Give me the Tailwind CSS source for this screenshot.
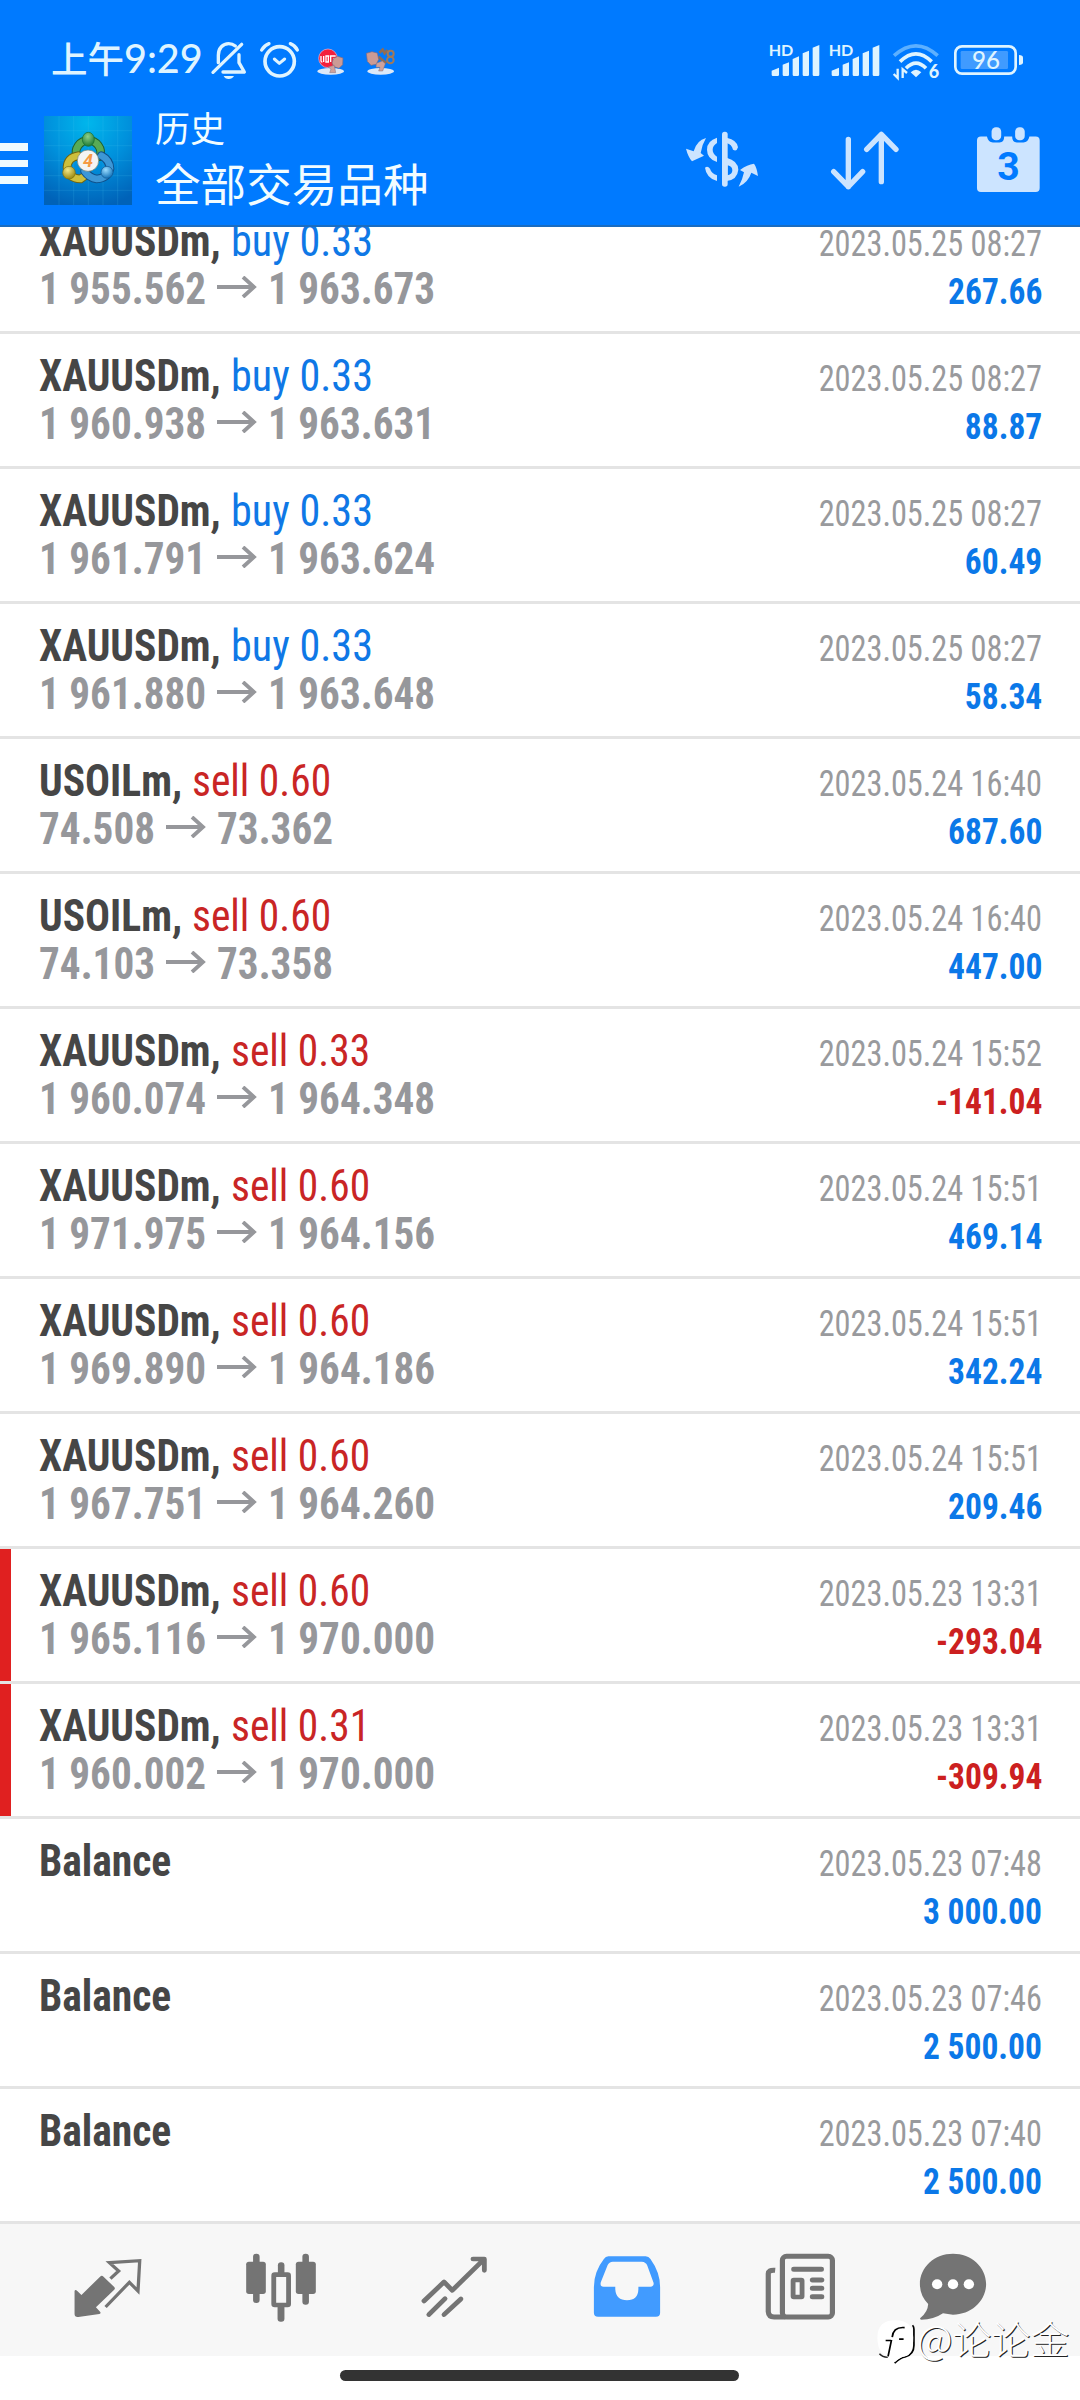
<!DOCTYPE html>
<html lang="zh">
<head>
<meta charset="utf-8">
<title>历史</title>
<script src="https://cdn.jsdelivr.net/npm/@tailwindcss/browser@4"></script>
</head>
<body class="bg-white">
<div class="relative flex h-[2400px] w-[1080px] flex-col overflow-hidden bg-white">

  <!-- Header -->
  <header class="relative z-10 h-[227px] shrink-0 border-b-2 border-[#1a6cc0] bg-[#007aff] pt-[39px]">
    <!-- Status bar -->
    <div class="flex h-[44px] items-start pl-[51px] text-[#dff4ff]">
      <div class="-mt-[3px] flex w-[158px] shrink-0 items-baseline whitespace-nowrap leading-[44px]">
        <span class="font-['Noto_Sans_CJK_SC',sans-serif] text-[36.5px] font-medium">上午</span>
        <span class="font-[Lato,sans-serif] text-[39.5px] font-medium">9:29</span>
      </div>
      <svg class="h-[44px] w-[40px] shrink-0" viewBox="626 117 120 132" fill="none" stroke="currentColor" stroke-width="10" stroke-linecap="round" stroke-linejoin="round">
        <path d="M654 188V166C654 144 668 131 685 131C693 131 700 134 705 138"/>
        <path d="M638 217L724 133"/>
        <path d="M716 164V188L732 216H668"/>
        <path d="M670 228H701Q696 237 685 237T670 228Z" fill="currentColor" stroke="none"/>
      </svg>
      <svg class="ml-[9px] h-[44px] w-[43px] shrink-0" viewBox="774 117 129 132" fill="none" stroke="currentColor" stroke-width="11" stroke-linecap="round" stroke-linejoin="round">
        <circle cx="839" cy="184" r="44"/>
        <path d="M823 177L838 190L854 177" stroke-width="9"/>
        <path d="M785 150Q793 136 807 131M871 131Q885 136 892 150" stroke-width="10"/>
      </svg>
      <svg class="ml-[14px] h-[44px] w-[32px] shrink-0" viewBox="946 117 96 132">
        <ellipse cx="993" cy="214" rx="40" ry="10" fill="#dce9f8"/>
        <circle cx="985" cy="175" r="28" fill="#f3203c" stroke="#e9b9d4" stroke-width="2"/>
        <path d="M964 168v14q0 4 4 4M972 168v18M979 168v18h7v-18zM993 168v18M990 168h18M1000 176h8" fill="none" stroke="#fff" stroke-width="4"/>
        <path d="M1001 176L1014 169L1030 174L1029 194L1018 205L1003 200L997 189Z" fill="#cb9b95" stroke="#7f6a7e" stroke-width="2"/>
        <path d="M985 201L1004 196L1008 218H990L994 207Z" fill="#cfa29c" stroke="#85707e" stroke-width="1.5"/>
      </svg>
      <svg class="ml-[17px] h-[44px] w-[34px] shrink-0" viewBox="1094 117 102 132">
        <ellipse cx="1144" cy="214" rx="40" ry="10" fill="#dce9f8"/>
        <path d="M1140 158L1150 149L1156 160L1164 150M1138 170L1160 190" fill="none" stroke="#8f6c55" stroke-width="8"/>
        <circle cx="1174" cy="161" r="9" fill="none" stroke="#a0795a" stroke-width="6"/>
        <circle cx="1173" cy="180" r="10" fill="none" stroke="#a0795a" stroke-width="6"/>
        <path d="M1101 160L1118 155L1134 159L1138 178L1131 193L1115 196L1104 184Z" fill="#cb9b95" stroke="#7f6a7e" stroke-width="2"/>
        <path d="M1131 190L1149 183L1158 191L1150 213H1138L1142 202L1130 202Z" fill="#cfa29c" stroke="#85707e" stroke-width="1.5"/>
      </svg>
      <svg class="ml-[370px] h-[44px] w-[54px] shrink-0" viewBox="326 117 162 132" fill="currentColor">
        <text x="328" y="168" font-family="Lato" font-weight="700" font-size="48" textLength="74" lengthAdjust="spacingAndGlyphs">HD</text>
        <path d="M337 212L359 203V224Q359 228 355 228H341Q337 228 337 224ZM370 194L389 187V224Q389 228 385 228H374Q370 228 370 224ZM400 177L419 169V224Q419 228 415 228H404Q400 228 400 224ZM430 160L449 152V224Q449 228 445 228H434Q430 228 430 224ZM460 143L480 135V224Q480 228 476 228H464Q460 228 460 224Z"/>
      </svg>
      <svg class="ml-[6px] h-[44px] w-[54px] shrink-0" viewBox="326 117 162 132" fill="currentColor">
        <text x="328" y="168" font-family="Lato" font-weight="700" font-size="48" textLength="74" lengthAdjust="spacingAndGlyphs">HD</text>
        <path d="M337 212L359 203V224Q359 228 355 228H341Q337 228 337 224ZM370 194L389 187V224Q389 228 385 228H374Q370 228 370 224ZM400 177L419 169V224Q419 228 415 228H404Q400 228 400 224ZM430 160L449 152V224Q449 228 445 228H434Q430 228 430 224ZM460 143L480 135V224Q480 228 476 228H464Q460 228 460 224Z"/>
      </svg>
      <svg class="ml-[9px] h-[44px] w-[50px] shrink-0" viewBox="693 117 150 132" fill="none" stroke="currentColor" stroke-width="11">
        <path d="M702 167Q768 108 833 167" stroke="#5db0ff"/>
        <path d="M720 185Q768 138 815 185"/>
        <path d="M738 205Q768 174 798 205"/>
        <path d="M752 217Q768 202 784 217L768 232Z" fill="currentColor" stroke="none"/>
        <path d="M713 206V234L701 222M728 234V208L741 219" stroke-width="7"/>
        <text x="806" y="235" font-family="Lato" font-weight="900" font-size="54" fill="currentColor" stroke="none">6</text>
      </svg>
      <svg class="ml-[12px] h-[44px] w-[72px] shrink-0" viewBox="879 117 216 132">
        <rect x="886" y="139" width="181" height="82" rx="20" fill="none" stroke="currentColor" stroke-width="8"/>
        <rect x="902" y="153" width="142" height="54" rx="4" fill="#409bff"/>
        <path d="M1077 165Q1089 165 1089 173V187Q1089 195 1077 195Z" fill="currentColor"/>
        <text x="936" y="208" font-family="Lato" font-weight="500" font-size="73" textLength="84" lengthAdjust="spacingAndGlyphs" fill="currentColor">96</text>
      </svg>
    </div>

    <!-- Toolbar -->
    <div class="flex items-start pt-[33px] text-[#cce4ff]">
      <div class="mt-[27px] flex w-[28px] shrink-0 flex-col gap-[9px]">
        <div class="h-[7.5px] bg-[#eefaff]"></div>
        <div class="h-[7.5px] bg-[#eefaff]"></div>
        <div class="h-[7.5px] bg-[#eefaff]"></div>
      </div>
      <svg class="ml-[16px] h-[89px] w-[88px] shrink-0" viewBox="132 348 264 267">
        <defs>
          <radialGradient id="tile" cx=".5" cy=".08" r=".95"><stop offset="0" stop-color="#00b6ec"/><stop offset=".5" stop-color="#0090dc"/><stop offset="1" stop-color="#0062b8"/></radialGradient>
          <radialGradient id="green" cx=".45" cy=".3" r=".7"><stop offset="0" stop-color="#8fd08a"/><stop offset="1" stop-color="#1c7a35"/></radialGradient>
          <radialGradient id="gold" cx=".4" cy=".3" r=".7"><stop offset="0" stop-color="#f2e88a"/><stop offset="1" stop-color="#9c8a10"/></radialGradient>
          <radialGradient id="azure" cx=".4" cy=".3" r=".7"><stop offset="0" stop-color="#9bdcff"/><stop offset="1" stop-color="#1272b8"/></radialGradient>
        </defs>
        <rect x="132" y="348" width="264" height="267" fill="url(#tile)"/>
        <path d="M177 348V615M221 348V615M265 348V615M309 348V615M353 348V615M132 392H396M132 437H396M132 482H396M132 527H396M132 571H396" stroke="#4fc4f5" stroke-opacity=".16" stroke-width="3"/>
        <g fill="none" stroke-linecap="round">
          <path d="M230 470A37 37 0 1 1 300 470" stroke="#20602e" stroke-width="26"/>
          <path d="M230 470A37 37 0 1 1 300 470" stroke="#58ab55" stroke-width="20"/>
          <path d="M234 467Q203 472 201 502Q205 536 242 537L262 522" stroke="#6f6412" stroke-width="26"/>
          <path d="M234 467Q203 472 201 502Q205 536 242 537L262 522" stroke="#cdbf3c" stroke-width="20"/>
          <path d="M304 467Q329 480 330 506Q322 535 290 537Q268 534 254 514" stroke="#10508a" stroke-width="26"/>
          <path d="M304 467Q329 480 330 506Q322 535 290 537Q268 534 254 514" stroke="#3d97d6" stroke-width="20"/>
        </g>
        <ellipse cx="265" cy="418" rx="18" ry="21" fill="url(#green)" stroke="#176b2c" stroke-width="2"/>
        <circle cx="207" cy="518" r="19" fill="url(#gold)" stroke="#7d7012" stroke-width="2"/>
        <circle cx="321" cy="517" r="18" fill="url(#azure)" stroke="#10558f" stroke-width="2"/>
        <circle cx="264" cy="482" r="32" fill="#f4f4f4" stroke="#6f7f70" stroke-width="2"/>
        <text x="264" y="500" text-anchor="middle" font-family="Roboto" font-weight="700" font-style="italic" font-size="54" fill="#f59a45">4</text>
      </svg>
      <div class="ml-[22px] w-[530px] shrink-0 whitespace-nowrap font-['Noto_Sans_CJK_SC',sans-serif] font-normal text-[#f2fcff]">
        <div class="-mt-[15px] pl-[1px] text-[35px] leading-[52px]">历史</div>
        <div class="mt-[1px] pl-[1px] text-[45.6px] leading-[56px]">全部交易品种</div>
      </div>
      <svg class="mt-[12px] h-[62px] w-[76px] shrink-0" viewBox="72 384 228 186" fill="currentColor">
        <rect x="186" y="395" width="17" height="165" rx="8"/>
        <path d="M171 413V429Q158 437 158 449T171 470V486Q141 476 141 449T171 413Z"/>
        <path d="M135 503Q143 497 150 506Q154 520 171 526V543Q139 534 135 503Z"/>
        <path d="M200 413Q232 420 234 442Q230 456 219 449Q215 433 200 429Z"/>
        <path fill-rule="evenodd" d="M200 473Q234 482 235 509Q232 539 200 543ZM203 496V526Q217 523 217 511T203 496Z"/>
        <path d="M138 414Q125 436 122 459L132 467L96 484Q84 470 78 446L101 454Q110 421 138 414Z"/>
        <path d="M236 560Q248 538 252 517L240 510Q262 493 282 491Q290 501 294 528L274 518Q264 548 236 560Z"/>
      </svg>
      <svg class="ml-[69px] mt-[12px] h-[64px] w-[72px] shrink-0" viewBox="508 384 216 192" fill="none" stroke="currentColor" stroke-width="16" stroke-linecap="round" stroke-linejoin="round">
        <path d="M566 418V560M522 515L566 560L609 515"/>
        <path d="M665 545V403M621 448L665 403L709 448"/>
      </svg>
      <svg class="ml-[74px] mt-[9px] h-[69px] w-[67px] shrink-0" viewBox="945 376 200 208" fill="currentColor">
        <path d="M962 411H980Q984 429 998 429H1018Q1032 429 1032 411H1056Q1056 429 1070 429H1090Q1104 429 1108 411H1127Q1139 411 1139 423V566Q1139 578 1127 578H962Q950 578 950 566V423Q950 411 962 411Z"/>
        <rect x="994" y="383" width="29" height="39" rx="13"/>
        <rect x="1065" y="383" width="29" height="39" rx="13"/>
        <text x="1045" y="543" text-anchor="middle" font-family="Roboto" font-weight="700" font-size="118" fill="#007aff">3</text>
      </svg>
    </div>
  </header>

  <!-- History list; the first row is scrolled partly under the header -->
  <main id="list" class="-mt-[28px] flex h-[2025px] shrink-0 flex-col font-['Roboto_Condensed',Roboto,sans-serif]"></main>

  <!-- Bottom navigation -->
  <nav class="flex h-[132px] shrink-0 items-start bg-[#f7f7f7] pl-[68px] pt-[25px] text-[#747474]">
    <svg class="h-[77.3px] w-[80px] shrink-0" viewBox="199 148 232 232" preserveAspectRatio="none" fill="currentColor">
      <path d="M218 274Q220 268 226 274L238 286L292 231Q297 226 302 231L333 262Q337 266 333 270L280 323L292 336Q296 341 290 343L229 352Q218 353 218 343Z"/>
      <path d="M322 237L346 214L319 189L407 183L402 274L377 248L308 322" fill="none" stroke="currentColor" stroke-width="9.5"/>
    </svg>
    <svg class="ml-[93px] h-[77.3px] w-[80px] shrink-0" viewBox="700 148 232 232" preserveAspectRatio="none" fill="currentColor">
      <rect x="735" y="162" width="19" height="148" rx="9"/><rect x="715" y="186" width="57" height="97" rx="8"/>
      <rect x="878" y="162" width="19" height="153" rx="9"/><rect x="859" y="186" width="58" height="97" rx="8"/>
      <rect x="807" y="188" width="19" height="40" rx="9"/><rect x="806" y="315" width="20" height="51" rx="9"/>
      <rect x="795" y="225" width="43" height="91" rx="3" fill="#f7f7f7" stroke="currentColor" stroke-width="14"/>
    </svg>
    <svg class="ml-[93px] h-[77.3px] w-[80px] shrink-0" viewBox="1202 148 232 232" preserveAspectRatio="none" fill="none" stroke="currentColor" stroke-width="14" stroke-linecap="round" stroke-linejoin="round">
      <path d="M1231 304L1289 247L1313 272L1404 180M1373 178H1406V212"/>
      <path d="M1245 345L1292 297M1289 345L1338 298"/>
    </svg>
    <svg class="ml-[93px] h-[77.3px] w-[80px] shrink-0 text-[#419bff]" viewBox="138 148 232 232" preserveAspectRatio="none" fill="currentColor">
      <path fill-rule="evenodd" d="M200 170H308Q317 170 322 178Q350 218 350 262V339Q350 351 338 351H170Q158 351 158 339V262Q158 216 187 178Q192 170 200 170ZM213 186Q202 187 198 196L178 248Q175 261 186 261H220V269Q222 302 254 302T287 269V261H322Q333 260 331 249L313 198Q309 187 297 186Z"/>
    </svg>
    <svg class="ml-[93px] h-[77.3px] w-[80px] shrink-0" viewBox="641 148 232 232" preserveAspectRatio="none" fill="none" stroke="currentColor" stroke-width="15" stroke-linejoin="round">
      <path d="M685 212Q664 210 665 224V336Q666 352 682 352H715"/>
      <rect x="706" y="170" width="145" height="182" rx="12"/>
      <path d="M739 209H819M793 241H820M793 266H820M793 291H820" stroke-linecap="round"/>
      <rect x="737" y="241" width="26" height="51" rx="2" stroke-width="14"/>
    </svg>
    <svg class="ml-[73px] h-[77.3px] w-[80px] shrink-0" viewBox="1083 148 232 232" preserveAspectRatio="none" fill="currentColor">
      <path d="M1199 162C1252 162 1295 202 1295 253S1252 345 1199 345Q1184 344 1170 341Q1143 360 1107 360Q1101 359 1105 354Q1126 337 1127 313Q1103 288 1103 253C1103 202 1146 162 1199 162Z"/>
      <circle cx="1153" cy="254" r="15" fill="#fff"/><circle cx="1199" cy="254" r="15" fill="#fff"/><circle cx="1245" cy="254" r="15" fill="#fff"/>
    </svg>
  </nav>

  <!-- System gesture bar -->
  <div class="mt-[14px] h-[11px] w-[399px] -translate-x-px self-center rounded-full bg-[#333]"></div>

  <!-- Watermark -->
  <div class="absolute left-[876px] top-[2310px] z-20 flex items-start text-white">
    <svg class="mt-[9px] h-[46px] w-[40px] shrink-0" viewBox="974 357 116 139" preserveAspectRatio="none">
      <path d="M1028 490Q1046 474 1058 472Q1084 464 1084 436V388Q1084 380 1080 376" fill="none" stroke="#000" stroke-width="5"/>
      <path d="M984 462Q992 472 1008 473" fill="none" stroke="#222" stroke-width="4"/>
      <path d="M1030 361Q1082 361 1082 413Q1082 468 1056 470Q1044 472 1028 488Q1032 472 1012 470Q978 464 978 413Q978 361 1030 361Z" fill="#fff"/>
      <path d="M1057 383Q1024 380 1021 412M1019 420L1009 470M1002 422H1018M1041 418H1054" fill="none" stroke="#000" stroke-width="5"/>
    </svg>
    <span class="ml-[1px] whitespace-nowrap font-['Noto_Sans_CJK_SC',sans-serif] text-[39px] font-light leading-[54px] [text-shadow:1px_1px_0_#222]">@论论金</span>
  </div>
</div>

<script>
const rows = [
  ['XAUUSDm','buy','0.33','1 955.562','1 963.673','2023.05.25 08:27','267.66'],
  ['XAUUSDm','buy','0.33','1 960.938','1 963.631','2023.05.25 08:27','88.87'],
  ['XAUUSDm','buy','0.33','1 961.791','1 963.624','2023.05.25 08:27','60.49'],
  ['XAUUSDm','buy','0.33','1 961.880','1 963.648','2023.05.25 08:27','58.34'],
  ['USOILm','sell','0.60','74.508','73.362','2023.05.24 16:40','687.60'],
  ['USOILm','sell','0.60','74.103','73.358','2023.05.24 16:40','447.00'],
  ['XAUUSDm','sell','0.33','1 960.074','1 964.348','2023.05.24 15:52','-141.04'],
  ['XAUUSDm','sell','0.60','1 971.975','1 964.156','2023.05.24 15:51','469.14'],
  ['XAUUSDm','sell','0.60','1 969.890','1 964.186','2023.05.24 15:51','342.24'],
  ['XAUUSDm','sell','0.60','1 967.751','1 964.260','2023.05.24 15:51','209.46'],
  ['XAUUSDm','sell','0.60','1 965.116','1 970.000','2023.05.23 13:31','-293.04',true],
  ['XAUUSDm','sell','0.31','1 960.002','1 970.000','2023.05.23 13:31','-309.94',true],
  ['Balance','','','','','2023.05.23 07:48','3 000.00'],
  ['Balance','','','','','2023.05.23 07:46','2 500.00'],
  ['Balance','','','','','2023.05.23 07:40','2 500.00'],
];
const sideStyle = { buy: 'scale-x-[.958] text-[#0f78e6]', sell: 'scale-x-[.942] text-[#c92525]' };
document.getElementById('list').innerHTML = rows.map(([sym, side, lot, from, to, time, profit, stopped]) => `
  <div class="flex h-[135px] shrink-0 justify-between border-b-3 border-[#e4e4e4] whitespace-nowrap">
    <div class="w-[11px] shrink-0 ${stopped ? 'bg-[#e02020]' : 'bg-white'}"></div>
    <div class="ml-[28px] flex-1 pt-[18px] text-[44px] leading-[48px]">
      <div class="flex">
        <span class="origin-left scale-x-[.943] font-bold text-[#464646]">${sym}${side ? ',' : ''}</span>
        ${side ? `<span class="origin-left ${sym === 'USOILm' ? 'ml-[1px]' : '-ml-[1px]'} ${sideStyle[side]}">${side} ${lot}</span>` : ''}
      </div>
      ${from ? `<div class="flex font-bold text-[#96979b]">
        <span class="origin-left scale-x-[.936]">${from}</span>
        <svg class="${sym === 'USOILm' ? 'ml-[3px]' : '-ml-[1px]'} mt-[11px] h-[22px] w-[40px] shrink-0" viewBox="0 0 40 22" fill="none" stroke="currentColor"><path d="M0 11H37" stroke-width="4"/><path d="M26 1L37 11L26 21" stroke-width="3.8"/></svg>
        <span class="ml-[11px] origin-left scale-x-[.936]">${to}</span>
      </div>` : ''}
    </div>
    <div class="flex flex-col items-end pr-[38px] pt-[21px] text-[36px] leading-[48px]">
      <span class="origin-right scale-x-[.897] text-[#999a9d]">${time}</span>
      <span class="origin-right scale-x-[.93] font-bold ${profit[0] === '-' ? 'text-[#cc2020]' : 'text-[#0b78e8]'}">${profit}</span>
    </div>
  </div>`).join('');
</script>
</body>
</html>
